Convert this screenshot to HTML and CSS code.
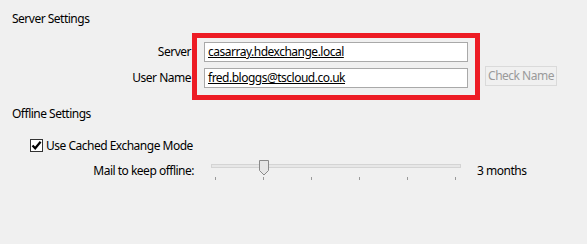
FILE: index.html
```html
<!DOCTYPE html>
<html lang="en">
<head>
<meta charset="utf-8">
<title>Server Settings</title>
<link rel="stylesheet" href="styles.css">
</head>
<body>
<div class="page">
  <div class="group-title">Server Settings</div>
  <div class="server-row">
    <div class="labels">
      <div class="label">Server</div>
      <div class="label">User Name</div>
    </div>
    <div class="highlight">
      <div class="field"><span class="field-text">casarray.hdexchange.local</span></div>
      <div class="field"><span class="field-text">fred.bloggs@tscloud.co.uk</span></div>
    </div>
    <div class="actions">
      <div class="btn">Check Name</div>
    </div>
  </div>
  <div class="group-title offline">Offline Settings</div>
  <div class="check-row">
    <span class="checkbox">
      <svg width="11" height="11" viewBox="0 0 11 11"><path d="M1.5 5.5 L4.2 8.3 L9.6 1.8" fill="none" stroke="#000" stroke-width="2.2"/></svg>
    </span>
    <span class="check-label">Use Cached Exchange Mode</span>
  </div>
  <div class="slider-row">
    <div class="slider-label">Mail to keep offline:</div>
    <div class="slider">
      <div class="track"></div>
      <svg class="thumb" width="11" height="16" viewBox="0 0 11 16"><path d="M0.5 0.5 H9.5 V10.5 L5 15 L0.5 10.5 Z" fill="#e6e6e6" stroke="#8a8a8a"/></svg>
      <div class="ticks">
        <span class="tick"></span><span class="tick"></span><span class="tick"></span><span class="tick"></span><span class="tick"></span><span class="tick"></span>
      </div>
    </div>
    <div class="slider-value">3 months</div>
  </div>
</div>
</body>
</html>
```

FILE: styles.css
```css
html, body {
  margin: 0;
  padding: 0;
  background: #f0f0f0;
}
body {
  font-family: "Noto Sans", "Open Sans", sans-serif;
  font-size: 12px;
  letter-spacing: -0.5px;
  color: #000;
}
.page {
  width: 587px;
  height: 244px;
  padding-top: 11px;
  box-sizing: border-box;
}
.group-title {
  line-height: 16px;
  margin-left: 12px;
}
.server-row {
  display: flex;
  margin-top: 6px;
}
.labels {
  width: 192px;
  box-sizing: border-box;
  padding-top: 9px;
  padding-right: 1px;
  display: flex;
  flex-direction: column;
  gap: 6px;
}
.label {
  height: 20px;
  line-height: 20px;
  text-align: right;
}
.highlight {
  width: 288px;
  box-sizing: border-box;
  border: 5px solid #ed1c24;
  padding: 4px 7px 7px 7px;
  display: flex;
  flex-direction: column;
  gap: 6px;
}
.field {
  height: 20px;
  box-sizing: border-box;
  border: 1px solid #a9a9a9;
  background: #fff;
  line-height: 18px;
  padding-left: 3px;
}
.field-text {
  text-decoration: underline;
}
.actions {
  padding-top: 33px;
  margin-left: 5px;
}
.btn {
  width: 72px;
  height: 20px;
  box-sizing: border-box;
  border: 1px solid #dadada;
  line-height: 18px;
  text-align: center;
  white-space: nowrap;
  color: #9a9a9a;
}
.offline {
  margin-top: 6px;
}
.check-row {
  display: flex;
  align-items: center;
  margin-top: 15px;
  margin-left: 30px;
  height: 16px;
}
.checkbox {
  width: 13px;
  height: 13px;
  box-sizing: border-box;
  border: 1px solid #333;
  background: #fff;
  display: flex;
  align-items: center;
  justify-content: center;
}
.check-label {
  margin-left: 3px;
}
.slider-row {
  display: flex;
  align-items: center;
  margin-top: 5px;
}
.slider-label {
  width: 194px;
  text-align: right;
}
.slider {
  position: relative;
  width: 250px;
  height: 24px;
  margin-left: 17px;
}
.track {
  margin-top: 6px;
  height: 4px;
  box-sizing: border-box;
  border: 1px solid #d4d4d4;
  background: #e7e7e7;
}
.thumb {
  position: absolute;
  left: 48px;
  top: 2px;
}
.ticks {
  display: flex;
  gap: 47px;
  margin-top: 9px;
  padding-left: 4px;
}
.tick {
  width: 1px;
  height: 3px;
  background: #9a9a9a;
}
.slider-value {
  margin-left: 16px;
}
```
